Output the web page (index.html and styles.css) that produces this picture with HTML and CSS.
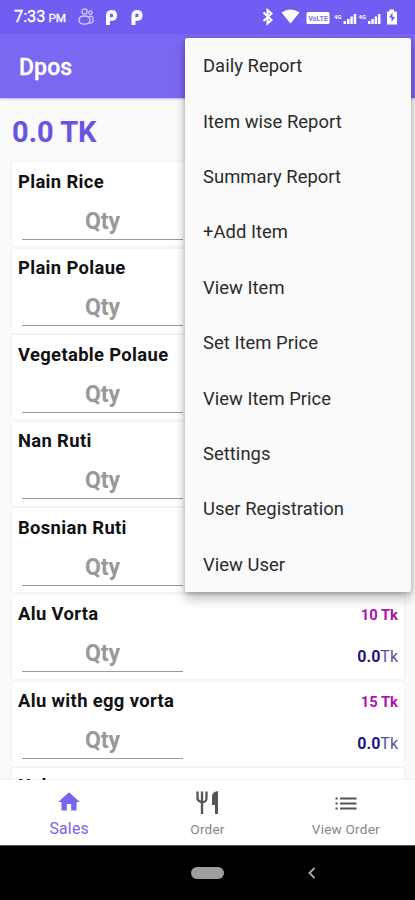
FILE: index.html
```html
<!DOCTYPE html>
<html lang="en">
<head>
<meta charset="utf-8">
<title>Dpos</title>
<link rel="stylesheet" href="styles.css">
</head>
<body>
<div class="phone">
  <div class="status">
    <span class="time">7:33<small>PM</small></span>
    <svg class="status-left" width="70" height="20" viewBox="0 0 70 20">
      <g fill="none" stroke="#d0caff" stroke-width="1.3">
        <circle cx="7.500" cy="4.500" r="2.600"/><circle cx="13.500" cy="5.500" r="1.700"/>
        <path d="M2 13q0-4 5.500-4t5.500 4-5.500 4.200T2 13zM12 9.500q4-1 4 2v3q-1 2-4 1.500"/>
      </g>
      <g fill="#fff" fill-rule="evenodd">
        <path d="M29 9q0-6 5.500-6T40 8.300q0 5.500-5.500 5.500H33V18h-4zM32.800 10.300h1.400q2 0 2-1.900t-1.800-1.900-1.600 1.900z"/>
        <path d="M54.500 9q0-6 5.500-6t5.500 5.300q0 5.500-5.500 5.500h-1.500V18h-4zM58.300 10.300h1.400q2 0 2-1.900t-1.800-1.900-1.600 1.900z"/>
      </g>
    </svg>
    <svg class="status-right" width="140" height="20" viewBox="0 0 140 20">
      <path d="M4.500 5.500l8 7.500-4 3.500V3l4 3.500-8 7.500" fill="none" stroke="#fff" stroke-width="2"/>
      <path d="M22.500 5.500Q31.500-.5 40.500 5.500L31.500 16.500z" fill="#fff"/>
      <rect x="47.500" y="5" width="23" height="12" rx="1.500" fill="#fff"/>
      <text x="59" y="13.500" text-anchor="middle" class="volte">VoLTE</text>
      <g fill="#fff">
        <text x="75" y="11.500" class="net">4G</text><text x="99.500" y="11.500" class="net">4G</text>
        <path d="M84.500 14h2.500v3h-2.500zM88 12h2.500v5H88zM91.300 9.500h2.500V17h-2.500zM94.700 7h2.500v10h-2.500zM109 14h2.500v3H109zM112.300 12h2.500v5h-2.500zM115.600 9.500h2.500V17h-2.500zM119 7h2.500v10H119z"/>
        <path d="M128 4.500h2.500V2.500h4.500v2h2q1 0 1 1V17.500h-10z"/>
      </g>
      <path d="M133.500 5.500l-3.500 5h2.500v4.500l3.500-5h-2.500z" fill="#6656e6"/>
    </svg>
  </div>
  <header class="appbar">Dpos</header>
  <main class="content">
    <div class="total">0.0 TK</div>
    <div class="list">
      <section class="card"><div class="row"><h2>Plain Rice</h2></div><div class="row"><div class="qty">Qty</div></div></section>
      <section class="card"><div class="row"><h2>Plain Polaue</h2></div><div class="row"><div class="qty">Qty</div></div></section>
      <section class="card"><div class="row"><h2>Vegetable Polaue</h2></div><div class="row"><div class="qty">Qty</div></div></section>
      <section class="card"><div class="row"><h2>Nan Ruti</h2></div><div class="row"><div class="qty">Qty</div></div></section>
      <section class="card"><div class="row"><h2>Bosnian Ruti</h2></div><div class="row"><div class="qty">Qty</div></div></section>
      <section class="card"><div class="row"><h2>Alu Vorta</h2><span class="price">10 Tk</span></div><div class="row"><div class="qty">Qty</div><span class="sum"><b>0.0</b>Tk</span></div></section>
      <section class="card"><div class="row"><h2>Alu with egg vorta</h2><span class="price">15 Tk</span></div><div class="row"><div class="qty">Qty</div><span class="sum"><b>0.0</b>Tk</span></div></section>
      <section class="card"><div class="row"><h2>Halua</h2></div></section>
    </div>
  </main>
  <nav class="tabs">
    <div class="tab active">
      <svg width="26" height="28" viewBox="0 0 24 26"><path fill="currentColor" d="M10 20v-6h4v6h5v-8h3L12 3 2 12h3v8z"/></svg>
      <span>Sales</span>
    </div>
    <div class="tab">
      <svg width="28" height="28" viewBox="0 0 28 28"><path d="M4.500 2.500v6.500q0 3.500 4.500 4t4.500-4V2.500M9 2.500v22.500" fill="none" stroke="#555" stroke-width="2.300"/><path d="M25 2v23h-3v-9h-3V7q0-4 6-5z" fill="#555"/></svg>
      <span>Order</span>
    </div>
    <div class="tab">
      <svg width="28" height="28" viewBox="0 0 28 28"><path d="M3.500 9.500h2.200M3.500 14.500h2.200M3.500 19.500h2.200M8 9.500h16.500M8 14.500h16.500M8 19.500h16.500" stroke="#555" stroke-width="2"/></svg>
      <span>View Order</span>
    </div>
  </nav>
  <div class="sysnav">
    <span class="pill"></span>
    <svg class="back" width="10" height="14" viewBox="0 0 10 14"><path d="M7.500 2L2.500 7l5 5" fill="none" stroke="#aaa" stroke-width="1.900"/></svg>
  </div>
  <div class="menu">
    <div>Daily Report</div><div>Item wise Report</div><div>Summary Report</div><div>+Add Item</div><div>View Item</div><div>Set Item Price</div><div>View Item Price</div><div>Settings</div><div>User Registration</div><div>View User</div>
  </div>
</div>
</body>
</html>
```
FILE: styles.css
```css
* { box-sizing: border-box; }
body { margin: 0; font-family: Roboto, sans-serif; background: #fafafa; }
.phone { position: relative; width: 415px; height: 900px; display: flex; flex-direction: column; overflow: hidden; }
.status { height: 34px; flex: none; display: flex; align-items: center; padding: 0 16px 0 14px; background: #715df1; color: #fff; }
.time { width: 63px; font-size: 16.300px; line-height: 34px; white-space: nowrap; -webkit-text-stroke: .3px #fff; }
.time small { font-size: 11.800px; margin-left: 3px; }
.status-left { flex: none; }
.status-right { flex: none; margin-left: auto; }
.volte { font-size: 7px; font-weight: 700; fill: #8172ee; }
.net { font-size: 6px; font-weight: 700; }
.appbar { height: 64px; flex: none; padding: 1px 19px 0; background: #7b68f2; color: #fff; font-size: 23px; font-weight: 500; line-height: 65px; letter-spacing: .1px; -webkit-text-stroke: .3px #fff; box-shadow: 0 1px 2px rgba(80,65,180,.4); }
.content { flex: 1; min-height: 0; overflow: hidden; padding: 0 11px 0 12px; }
.total { height: 64px; line-height: 69px; font-size: 29px; font-weight: 700; color: #6755e2; }
.list { display: flex; flex-direction: column; gap: 2.600px; }
.card { height: 84px; flex: none; padding: 6px 6px 0; background: #fff; box-shadow: 0 0 2px rgba(0,0,0,.08); }
.card:last-child { padding-top: 4px; }
.row { display: flex; justify-content: space-between; align-items: center; height: 26px; }
.row + .row { height: 46px; align-items: flex-start; }
h2 { margin: 0; font-size: 18.400px; font-weight: 700; color: #111; letter-spacing: .35px; }
.qty { width: 161px; height: 46px; margin-left: 4px; margin-top: -.5px; border-bottom: 1.500px solid #999; text-align: center; color: #999; font-size: 23px; font-weight: 700; line-height: 56px; }
.price { color: #aa13aa; font-size: 14.800px; font-weight: 700; padding-top: 3px; }
.sum { color: #55559d; font-size: 16px; line-height: 59px; }
.sum b { color: #1b1680; font-weight: 700; }
.tabs { height: 65px; flex: none; display: flex; background: #fff; z-index: 1; padding-top: 9px; box-shadow: 0 -1px 2px rgba(0,0,0,.05); }
.tab { flex: 1; display: flex; flex-direction: column; align-items: center; color: #858585; font-size: 13.600px; letter-spacing: .2px; }
.tab svg { flex: none; }
.tab span { line-height: 24px; }
.active { color: #7665ed; font-size: 15.800px; }
.active span { line-height: 23px; }
.sysnav { height: 55px; flex: none; display: grid; grid-template-columns: 1fr 1fr 1fr; place-items: center; background: #000; border-top: 1px solid #555; }
.pill { grid-column: 2; width: 33px; height: 12px; border-radius: 6px; background: #9e9e9e; }
.back { justify-self: start; margin-left: 30px; }
.menu { position: absolute; left: 185px; top: 38px; width: 226px; height: 554px; display: flex; flex-direction: column; z-index: 2; background: #fafafa; border-radius: 2px; box-shadow: 0 7px 12px rgba(0,0,0,.24), 0 1px 5px rgba(0,0,0,.22); color: #2b2b2b; font-size: 18.400px; }
.menu div { flex: 1; display: flex; align-items: center; padding-left: 18px; letter-spacing: .04px; }
```
